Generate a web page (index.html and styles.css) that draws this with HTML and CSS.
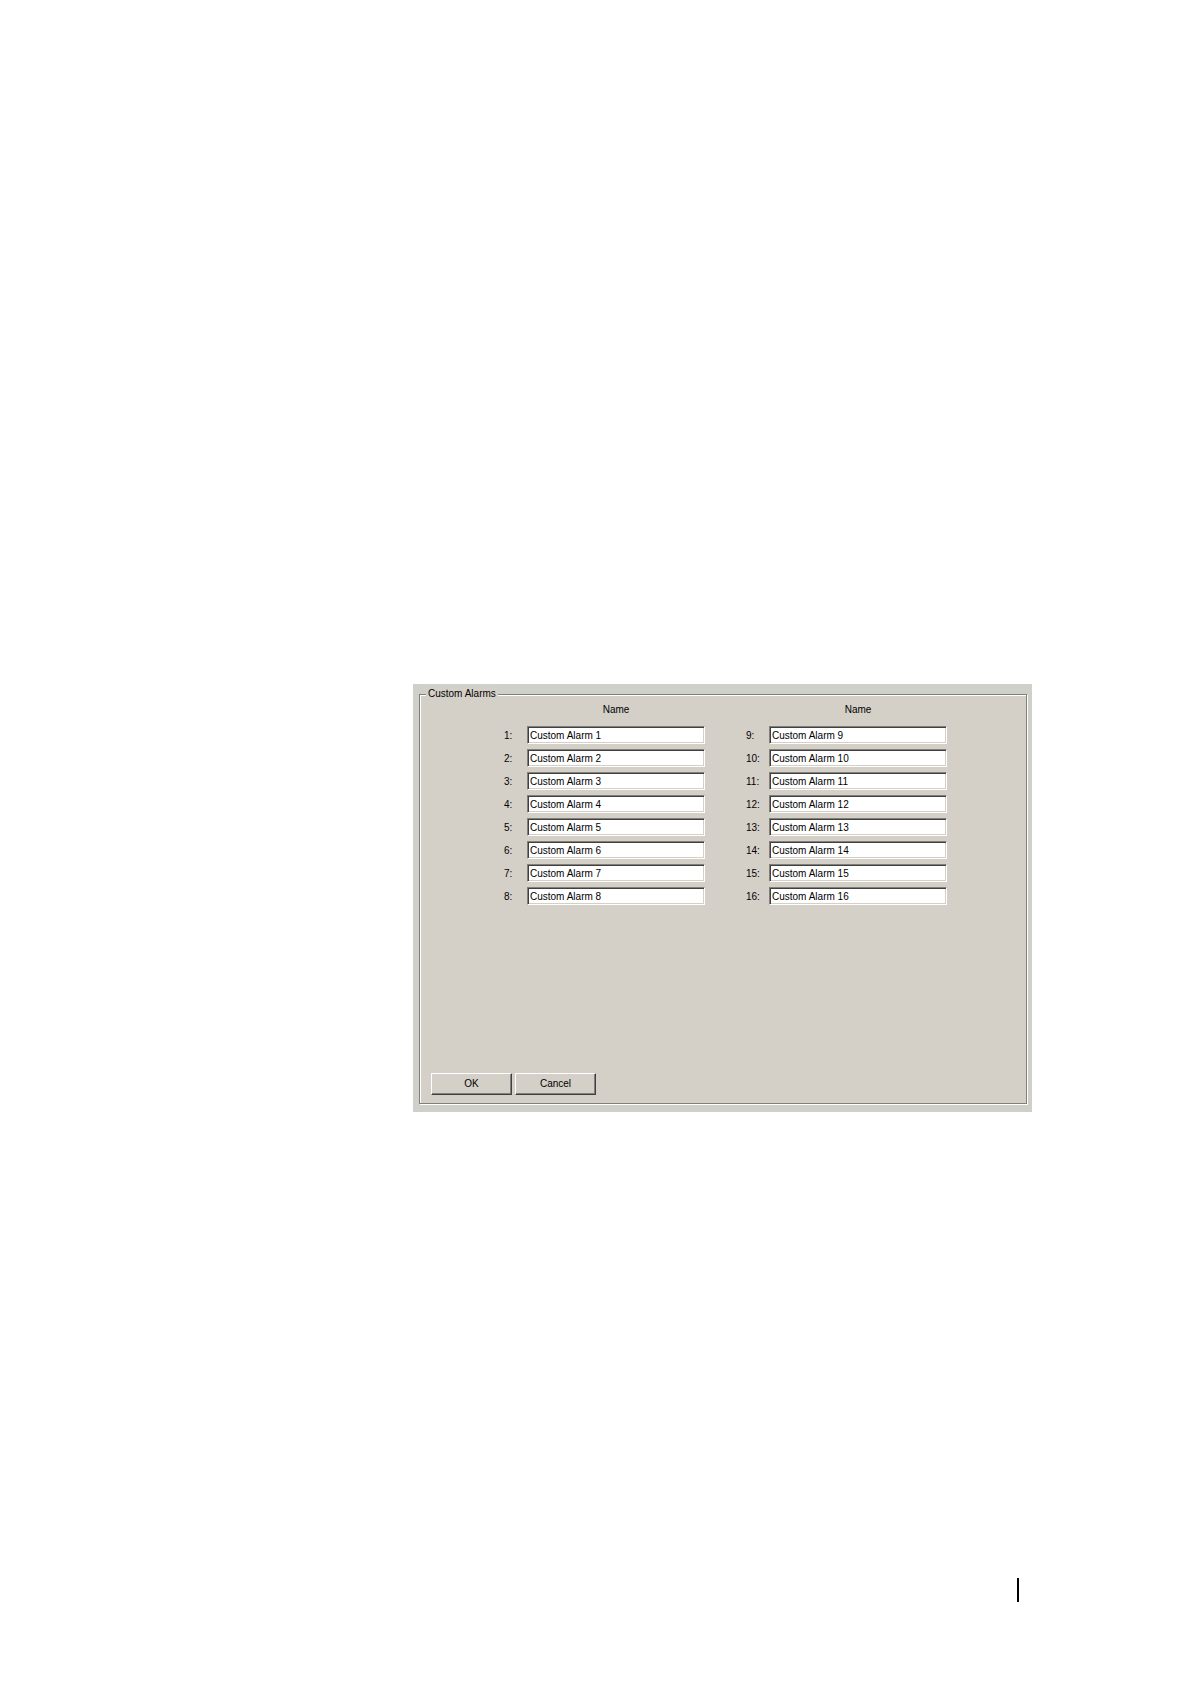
FILE: index.html
```
<!DOCTYPE html>
<html lang="en">
<head>
    <meta charset="UTF-8">
    <title>Custom Alarms</title>
    <link rel="stylesheet" href="styles.css">
</head>
<body>
    <main class="page">
        <form class="panel">
            <fieldset class="group">
                <legend>Custom Alarms</legend>

                <div class="group-body">
                    <div class="alarms">
                        <div class="alarm-column">
                            <div class="column-title">Name</div>
                            <label for="alarm1">1:</label>
                            <input type="text" id="alarm1" value="Custom Alarm 1">
                            <label for="alarm2">2:</label>
                            <input type="text" id="alarm2" value="Custom Alarm 2">
                            <label for="alarm3">3:</label>
                            <input type="text" id="alarm3" value="Custom Alarm 3">
                            <label for="alarm4">4:</label>
                            <input type="text" id="alarm4" value="Custom Alarm 4">
                            <label for="alarm5">5:</label>
                            <input type="text" id="alarm5" value="Custom Alarm 5">
                            <label for="alarm6">6:</label>
                            <input type="text" id="alarm6" value="Custom Alarm 6">
                            <label for="alarm7">7:</label>
                            <input type="text" id="alarm7" value="Custom Alarm 7">
                            <label for="alarm8">8:</label>
                            <input type="text" id="alarm8" value="Custom Alarm 8">
                        </div>

                        <div class="alarm-column">
                            <div class="column-title">Name</div>
                            <label for="alarm9">9:</label>
                            <input type="text" id="alarm9" value="Custom Alarm 9">
                            <label for="alarm10">10:</label>
                            <input type="text" id="alarm10" value="Custom Alarm 10">
                            <label for="alarm11">11:</label>
                            <input type="text" id="alarm11" value="Custom Alarm 11">
                            <label for="alarm12">12:</label>
                            <input type="text" id="alarm12" value="Custom Alarm 12">
                            <label for="alarm13">13:</label>
                            <input type="text" id="alarm13" value="Custom Alarm 13">
                            <label for="alarm14">14:</label>
                            <input type="text" id="alarm14" value="Custom Alarm 14">
                            <label for="alarm15">15:</label>
                            <input type="text" id="alarm15" value="Custom Alarm 15">
                            <label for="alarm16">16:</label>
                            <input type="text" id="alarm16" value="Custom Alarm 16">
                        </div>
                    </div>

                    <div class="buttons">
                        <button type="submit">OK</button>
                        <button type="button">Cancel</button>
                    </div>
                </div>
            </fieldset>
        </form>
    </main>
    <footer class="page-footer">
        <div class="footer-rule"></div>
    </footer>
</body>
</html>
```

FILE: styles.css
```
:root {
    --face: #d4d0c8;
    --edge: #d0d0ca;
    --highlight: #fff;
    --shadow: #808078;
    --dark-shadow: #404040;
}

* {
    box-sizing: border-box;
}

body {
    margin: 0;
    min-height: 100vh;
    display: flex;
    flex-direction: column;
    background: #fff;
    color: #000;
    font-family: "Liberation Sans", Arial, sans-serif;
    font-size: 10px;
    line-height: 14px;
}

.page {
    flex: 1;
    padding: 684px 158px 0 413px;
}

.panel {
    padding: 3px 5px 8px 6px;
    background: var(--edge);
}

.group {
    min-width: 0;
    margin: 0;
    padding: 2px 11px 8px;
    border: 1px solid var(--shadow);
    background: var(--face);
    box-shadow: 1px 1px var(--highlight), inset 1px 1px var(--highlight);
}

.group legend {
    margin-left: -5px;
    padding: 0 2px;
    background: var(--face);
}

.group-body {
    display: flex;
    flex-direction: column;
    min-height: 392px;
}

.alarms {
    display: flex;
    gap: 41px;
    padding-left: 73px;
}

.alarm-column {
    display: grid;
    grid-template-columns: 23px 178px;
    row-gap: 5px;
    align-items: center;
}

.column-title {
    grid-column: 2;
    margin-bottom: 4px;
    text-align: center;
}

.alarm-column label {
    padding-top: 2px;
}

input {
    width: 100%;
    height: 18px;
    padding: 0 2px;
    border: 1px solid;
    border-color: var(--shadow) var(--highlight) var(--highlight) var(--shadow);
    border-radius: 0;
    background: #fff;
    box-shadow: inset 1px 1px var(--dark-shadow), inset -1px -1px var(--face);
    color: inherit;
    font: inherit;
    outline: none;
}

.buttons {
    display: flex;
    gap: 3px;
    margin-top: auto;
}

button {
    width: 81px;
    height: 22px;
    padding: 0;
    border: 1px solid;
    border-color: var(--highlight) var(--dark-shadow) var(--dark-shadow) var(--highlight);
    border-radius: 0;
    background: var(--face);
    box-shadow: inset -1px -1px var(--shadow);
    color: inherit;
    font: inherit;
}

.page-footer {
    display: flex;
    justify-content: flex-end;
    padding: 0 171px 82px 0;
}

.footer-rule {
    width: 2px;
    height: 24px;
    background: #000;
}
```
